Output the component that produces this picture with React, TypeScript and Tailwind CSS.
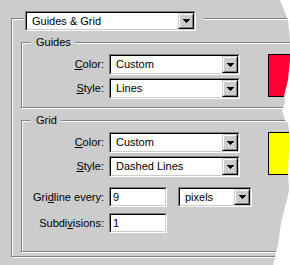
import React from 'react'

const FACE = 'bg-[#cccccc]'

const Arrow = () => (
  <svg width="7" height="4" viewBox="0 0 7 4" shapeRendering="crispEdges">
    <path d="M0 0h7v1h-1v1h-1v1h-1v1h-1v-1h-1v-1h-1v-1h-1z" fill="#000" />
  </svg>
)

const DropButton = () => (
  <div className="flex w-[16px] border border-b-black border-l-[#cccccc] border-r-black border-t-[#cccccc] bg-[#cccccc]">
    <div className="flex flex-1 items-center justify-center border border-b-[#808080] border-l-white border-r-[#808080] border-t-white">
      <Arrow />
    </div>
  </div>
)

const Sunken = ({ className, children }: { className?: string; children?: React.ReactNode }) => (
  <div className={`border border-b-white border-l-[#808080] border-r-white border-t-[#808080] ${className ?? ''}`}>
    <div className="flex h-full border border-b-[#cccccc] border-l-black border-r-[#cccccc] border-t-black bg-white">
      {children}
    </div>
  </div>
)

const Combo = ({ value, className }: { value: string; className?: string }) => (
  <Sunken className={className}>
    <div className="flex flex-1 items-center overflow-hidden whitespace-nowrap pl-[5px]">{value}</div>
    <DropButton />
  </Sunken>
)

const TextBox = ({ value }: { value: string }) => (
  <Sunken className="h-[20px] w-[58px]">
    <div className="flex flex-1 items-center pl-[2px]">{value}</div>
  </Sunken>
)

const GroupBox = ({
  label,
  className,
  children,
}: {
  label?: string
  className?: string
  children?: React.ReactNode
}) => (
  <div className={`border border-[#808080] shadow-[inset_1px_1px_0_#fff,1px_1px_0_#fff] ${className ?? ''}`}>
    {label && <div className={`-mt-[7px] ml-[8px] w-fit pl-[6px] pr-[4px] ${FACE}`}>{label}</div>}
    {children}
  </div>
)

const Label = ({ children }: { children: React.ReactNode }) => (
  <div className="w-[82px] shrink-0 whitespace-nowrap text-right">{children}</div>
)

const Row = ({ label, children }: { label: React.ReactNode; children: React.ReactNode }) => (
  <div className="flex items-center">
    <Label>{label}</Label>
    <div className="ml-[5px] flex items-center">{children}</div>
  </div>
)

const ColorStyle = ({ color, style, swatch }: { color: string; style: string; swatch: string }) => (
  <div className="mt-[5px] flex items-start">
    <div className="flex flex-col gap-[3px]">
      <Row label={<><u className="underline-offset-1">C</u>olor:</>}>
        <Combo value={color} className="h-[21px] w-[131px]" />
      </Row>
      <Row label={<><u className="underline-offset-1">S</u>tyle:</>}>
        <Combo value={style} className="h-[21px] w-[131px]" />
      </Row>
    </div>
    <div className={`ml-[28px] h-[43px] w-[30px] shrink-0 border border-black ${swatch}`} />
  </div>
)

export default function App() {
  return (
    <div className="relative h-[265px] w-[290px] overflow-hidden bg-[#cccccc] pl-[11px] pt-[18px] font-['Liberation_Sans',Arial,sans-serif] text-[11px] leading-[13px] text-black">
      <GroupBox className="h-[239px] w-[300px] shrink-0">
        <div className={`-mt-[8px] ml-[12px] w-fit pl-[1px] pr-[8px] ${FACE}`}>
          <Combo value="Guides & Grid" className="h-[20px] w-[171px]" />
        </div>

        <div className="ml-[9px] mt-[11px]">
          <GroupBox label="Guides" className="h-[66px] w-[290px]">
            <ColorStyle color="Custom" style="Lines" swatch="bg-[#ff0033]" />
          </GroupBox>

          <GroupBox label="Grid" className="mt-[12px] h-[132px] w-[290px]">
            <ColorStyle color="Custom" style="Dashed Lines" swatch="bg-[#ffff00]" />
            <div className="mt-[10px]">
              <Row label={<>Gri<u className="underline-offset-1">d</u>line every:</>}>
                <TextBox value="9" />
                <Combo value="pixels" className="ml-[11px] h-[20px] w-[74px]" />
              </Row>
            </div>
            <div className="mt-[6px]">
              <Row label={<>Subdi<u className="underline-offset-1">v</u>isions:</>}>
                <TextBox value="1" />
              </Row>
            </div>
          </GroupBox>
        </div>
      </GroupBox>

      {/* torn paper edge */}
      <svg className="pointer-events-none absolute left-0 top-0" width="290" height="265" viewBox="0 0 290 265">
        <polygon
          fill="#fff"
          points="280,0 282,5 284,10 286,15 288,20 289,30 290,40 290,60 289,70 288,80 286,88 285,92 284,97 285,102 283,108 282,111 285,120 288,123 289,130 289,150 288,170 289,190 287,200 285,207 283,215 281,223 280,230 279,238 278,245 276,252 275,258 273,265 290,265 290,0"
        />
      </svg>
    </div>
  )
}
